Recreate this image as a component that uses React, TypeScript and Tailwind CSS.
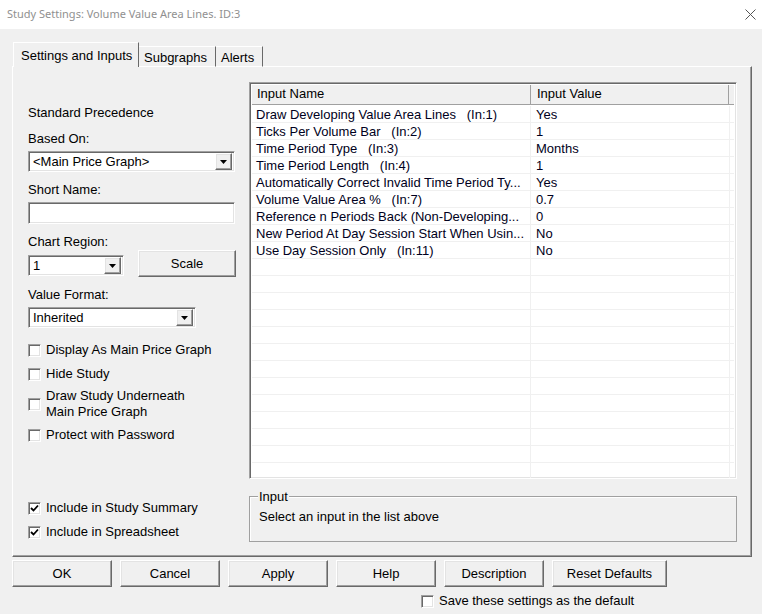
import type { ReactNode } from 'react';

const sunken =
  'border border-t-[#a0a0a0] border-l-[#a0a0a0] border-r-white border-b-white shadow-[inset_1px_1px_0_#696969,inset_-1px_-1px_0_#e3e3e3]';
const raised =
  'border border-t-white border-l-white border-r-[#696969] border-b-[#696969] shadow-[inset_-1px_-1px_0_#a0a0a0,inset_1px_1px_0_#e3e3e3]';

const rows: [string, string][] = [
  ['Draw Developing Value Area Lines   (In:1)', 'Yes'],
  ['Ticks Per Volume Bar   (In:2)', '1'],
  ['Time Period Type   (In:3)', 'Months'],
  ['Time Period Length   (In:4)', '1'],
  ['Automatically Correct Invalid Time Period Ty...', 'Yes'],
  ['Volume Value Area %   (In:7)', '0.7'],
  ['Reference n Periods Back (Non-Developing...', '0'],
  ['New Period At Day Session Start When Usin...', 'No'],
  ['Use Day Session Only   (In:11)', 'No'],
];

function Arrow() {
  return (
    <svg width="7" height="4" viewBox="0 0 7 4">
      <polygon points="0,0 7,0 3.5,4" fill="#000" />
    </svg>
  );
}

function Combo({ width, value }: { width: string; value: string }) {
  return (
    <div className={`${width} h-[21px] bg-white flex items-center p-[2px] ${sunken}`}>
      <span className="flex-1 pl-[2px] leading-[18px] truncate">{value}</span>
      <div className={`w-[17px] h-[17px] bg-[#f0f0f0] flex items-center justify-center ${raised}`}>
        <Arrow />
      </div>
    </div>
  );
}

function CheckBox({ checked, children, className = '' }: { checked?: boolean; children: ReactNode; className?: string }) {
  return (
    <div className={`flex items-center gap-[5px] ${className}`}>
      <div className={`w-[13px] h-[13px] bg-white flex items-center justify-center shrink-0 ${sunken}`}>
        {checked && (
          <svg width="9" height="9" viewBox="0 0 9 9">
            <polyline points="1,4 3.5,6.5 8,1.5" fill="none" stroke="#000" strokeWidth="1.8" />
          </svg>
        )}
      </div>
      <div className="leading-[16px]">{children}</div>
    </div>
  );
}

function Button({ label, width = 'w-[100px]' }: { label: string; width?: string }) {
  return (
    <div className={`${width} h-[27px] bg-[#f0f0f0] flex items-center justify-center pt-[1px] ${raised}`}>
      {label}
    </div>
  );
}

export default function App() {
  return (
    <div className="w-[762px] h-[614px] bg-[#f0f0f0] font-['Liberation_Sans',Arial,sans-serif] text-[13px] text-black overflow-hidden select-none">
      <div className="h-[29px] bg-white flex items-center justify-between pl-[7px] pr-[6px]">
        <span className="font-['Noto_Sans',sans-serif] text-[11px] text-[#909090]">
          Study Settings: Volume Value Area Lines. ID:3
        </span>
        <svg width="11" height="11" viewBox="0 0 11 11">
          <path d="M0.5 0.5 L10.5 10.5 M10.5 0.5 L0.5 10.5" stroke="#555" strokeWidth="1" />
        </svg>
      </div>

      <div className="pl-[12px] pt-[14px]">
        <div className="flex items-end h-[24px] relative z-10 -mb-[1px]">
          <div className="ml-[1px] w-[126px] h-[25px] bg-[#f0f0f0] border-t border-l border-white border-r border-r-[#696969] pl-[7px] pt-[5px] leading-[16px]">
            Settings and Inputs
          </div>
          <div className="w-[77px] h-[21px] border-t border-white border-r border-r-[#696969] border-b border-b-white pl-[5px] pt-[3px] leading-[16px]">
            Subgraphs
          </div>
          <div className="w-[47px] h-[21px] border-t border-white border-r border-r-[#696969] border-b border-b-white pl-[5px] pt-[3px] leading-[16px]">
            Alerts
          </div>
        </div>

        <div className="w-[740px] h-[491px] border-t border-l border-white border-r border-r-[#696969] border-b border-b-[#696969] shadow-[inset_-1px_-1px_0_#a0a0a0] flex pl-[15px]">
          <div className="w-[221px] flex flex-col">
            <div className="mt-[38px] leading-[16px]">Standard Precedence</div>
            <div className="mt-[10px] leading-[16px]">Based On:</div>
            <div className="mt-[4px]">
              <Combo width="w-[207px]" value="<Main Price Graph>" />
            </div>
            <div className="mt-[10px] leading-[16px]">Short Name:</div>
            <div className={`mt-[4px] w-[207px] h-[22px] bg-white ${sunken}`} />
            <div className="mt-[10px] leading-[16px]">Chart Region:</div>
            <div className="h-[28px] flex items-start">
              <div className="mt-[5px]">
                <Combo width="w-[96px]" value="1" />
              </div>
              <div className="ml-[14px]">
                <Button label="Scale" width="w-[98px]" />
              </div>
            </div>
            <div className="mt-[9px] leading-[16px]">Value Format:</div>
            <div className="mt-[4px]">
              <Combo width="w-[168px]" value="Inherited" />
            </div>
            <CheckBox className="mt-[14px]">Display As Main Price Graph</CheckBox>
            <CheckBox className="mt-[8px]">Hide Study</CheckBox>
            <CheckBox className="mt-[6px]">
              Draw Study Underneath
              <br />
              Main Price Graph
            </CheckBox>
            <CheckBox className="mt-[7px]">Protect with Password</CheckBox>
            <CheckBox checked className="mt-[57px]">Include in Study Summary</CheckBox>
            <CheckBox checked className="mt-[8px]">Include in Spreadsheet</CheckBox>
          </div>

          <div className="w-[488px] flex flex-col">
            <div className={`mt-[15px] h-[397px] bg-white p-[2px] overflow-hidden ${sunken}`}>
              <div className="flex h-[20px] bg-[#f0f0f0] border-b border-b-[#a0a0a0]">
                <div className="w-[279px] border-r border-r-[#a0a0a0] pl-[5px] leading-[17px]">Input Name</div>
                <div className="w-[198px] border-r border-r-[#a0a0a0] pl-[6px] leading-[17px]">Input Value</div>
                <div className="flex-1" />
              </div>
              <div className="h-[1px]" />
              {Array.from({ length: 22 }).map((_, i) => (
                <div key={i} className="flex h-[17px] border-b border-b-[#f0f0f0] text-[#000020]">
                  <div className="w-[279px] border-r border-r-[#f0f0f0] pl-[4px] leading-[18px] whitespace-pre">
                    {rows[i]?.[0] ?? ''}
                  </div>
                  <div className="w-[199px] border-r border-r-[#f0f0f0] pl-[5px] leading-[18px]">
                    {rows[i]?.[1] ?? ''}
                  </div>
                  <div className="flex-1" />
                </div>
              ))}
            </div>
            <div className="relative mt-[17px] h-[46px] border border-[#a0a0a0] shadow-[inset_1px_1px_0_#fff] pl-[9px] pt-[12px]">
              <span className="absolute -top-[9px] left-[8px] bg-[#f0f0f0] px-[1px] leading-[18px]">Input</span>
              <div className="leading-[16px]">Select an input in the list above</div>
            </div>
          </div>
        </div>
      </div>

      <div className="flex gap-[8px] pl-[12px] mt-[3px]">
        <Button label="OK" />
        <Button label="Cancel" />
        <Button label="Apply" />
        <Button label="Help" />
        <Button label="Description" />
        <Button label="Reset Defaults" width="w-[115px]" />
      </div>
      <div className="ml-[421px] mt-[6px]">
        <CheckBox>Save these settings as the default</CheckBox>
      </div>
    </div>
  );
}
